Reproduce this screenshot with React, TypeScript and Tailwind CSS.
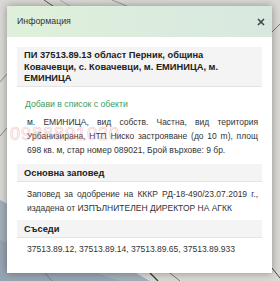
import React from 'react'

const font = { fontFamily: '"Liberation Sans", Arial, sans-serif' }

function MapBackdrop() {
    return (
        <svg className="absolute inset-0" width="280" height="281" viewBox="0 0 280 281">
            <rect width="280" height="281" fill="#dbd9d5" />
            <polygon points="0,200 0,281 150,281 60,230" fill="#a3afb9" />
            <polygon points="0,240 0,281 120,281" fill="#96a5b2" />
            <line x1="44" y1="0" x2="56" y2="8" stroke="#555" strokeWidth="1" />
            <line x1="112" y1="0" x2="134" y2="9" stroke="#9a9a9a" strokeWidth="1" />
            <line x1="60" y1="0" x2="70" y2="6" stroke="#aaa" strokeWidth="1" />
            <line x1="0" y1="82" x2="7" y2="74" stroke="#888" strokeWidth="1" />
            <line x1="0" y1="136" x2="7" y2="128" stroke="#888" strokeWidth="1" />
            <line x1="272" y1="32" x2="280" y2="24" stroke="#777" strokeWidth="1" />
            <line x1="272" y1="268" x2="280" y2="278" stroke="#444" strokeWidth="1" />
            <line x1="150" y1="273" x2="158" y2="281" stroke="#333" strokeWidth="1.2" />
            <line x1="170" y1="273" x2="180" y2="281" stroke="#777" strokeWidth="1" />
            <line x1="45" y1="273" x2="52" y2="281" stroke="#6f7d88" strokeWidth="1" />
        </svg>
    )
}

function SectionTitle({ children }: { children: React.ReactNode }) {
    return (
        <div className="bg-[#f4f4f4] border-b border-[#e4e4e4] pl-[7px] pt-[3px] pb-[2px] text-[9.3px] leading-[12px] font-bold text-[#222]">
            {children}
        </div>
    )
}

export default function App() {
    return (
        <div className="relative w-[280px] h-[281px] overflow-hidden" style={font}>
            <MapBackdrop />

            <div className="relative ml-[7px] pt-[6px] w-[265px]">
                <div className="bg-white shadow-[0_0_8px_rgba(0,0,0,0.35)] h-[267px]">
                    <div className="h-[31px] flex items-center justify-between pl-[10px] pr-[6px] bg-gradient-to-r from-[#dff0da] to-[#d8e8e0]">
                        <span className="text-[8.8px] text-[#333]">Информация</span>
                        <svg width="8" height="8" viewBox="0 0 8 8" className="mr-[1px]">
                            <path d="M1 1 L7 7 M7 1 L1 7" stroke="#444" strokeWidth="1.6" />
                        </svg>
                    </div>

                    <div className="px-[10px] pt-[10px]">
                        <div className="bg-[#f4f4f4] border-b border-[#e4e4e4] pl-[7px] pr-[20px] pt-[3px] pb-[1px] text-[9.3px] leading-[11.5px] font-bold text-[#222]">
                            ПИ 37513.89.13 област Перник, община Ковачевци, с. Ковачевци, м. ЕМИНИЦА, м. ЕМИНИЦА
                        </div>

                        <div className="mt-[10px] pl-[8px] text-[8.7px] leading-[14px] text-[#3d9b5c]">
                            Добави в список с обекти
                        </div>

                        <p className="mt-[4px] pl-[10px] pr-[4px] text-[8.5px] leading-[14px] text-[#333] text-justify">
                            м. ЕМИНИЦА, вид собств. Частна, вид територия Урбанизирана, НТП Ниско застрояване (до 10 m), площ 698 кв. м, стар номер 089021, Брой върхове: 9 бр.
                        </p>

                        <div className="mt-[7px]">
                            <SectionTitle>Основна заповед</SectionTitle>
                        </div>
                        <p className="mt-[5px] pl-[10px] pr-[4px] text-[8.5px] leading-[14px] text-[#333] text-justify">
                            Заповед за одобрение на КККР РД-18-490/23.07.2019 г., издадена от ИЗПЪЛНИТЕЛЕН ДИРЕКТОР НА АГКК
                        </p>

                        <div className="mt-[5px]">
                            <SectionTitle>Съседи</SectionTitle>
                        </div>
                        <p className="mt-[4px] pl-[10px] text-[8.5px] leading-[14px] text-[#333]">
                            37513.89.12, 37513.89.14, 37513.89.65, 37513.89.933
                        </p>
                    </div>
                </div>
            </div>

            <div className="absolute left-[10px] top-[124px] text-[18px] leading-[20px] tracking-[1px] text-transparent [-webkit-text-stroke:0.6px_#e89a9a] opacity-60 pointer-events-none">
                0988891020
            </div>
        </div>
    )
}
